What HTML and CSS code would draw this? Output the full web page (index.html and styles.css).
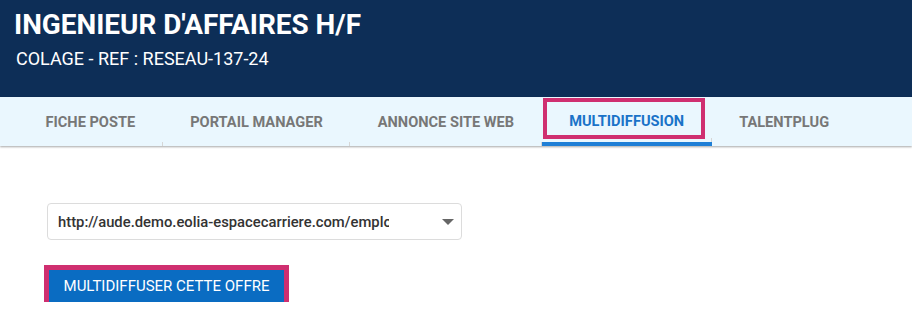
FILE: index.html
```html
<!DOCTYPE html>
<html>
<head>
    <title>Multidiffusion</title>
    <link rel="stylesheet" href="styles.css">
</head>
<body>
    <header class="job-header">
        <h1>INGENIEUR D'AFFAIRES H/F</h1>
        <p>COLAGE - REF : RESEAU-137-24</p>
    </header>
    <nav class="tabs">
        <a class="tab">FICHE POSTE</a>
        <a class="tab">PORTAIL MANAGER</a>
        <a class="tab">ANNONCE SITE WEB</a>
        <a class="tab active">MULTIDIFFUSION<span class="mark"></span></a>
        <a class="tab last">TALENTPLUG</a>
    </nav>
    <main class="content">
        <div class="site-select">
            <span class="site-value">http://aude.demo.eolia-espacecarriere.com/emploi</span>
            <span class="caret"></span>
        </div>
        <button class="diffuse-button">MULTIDIFFUSER CETTE OFFRE</button>
    </main>
</body>
</html>
```

FILE: styles.css
```css
body {
    margin: 0;
    padding: 0;
    background: #fff;
    font-family: Roboto, "Liberation Sans", sans-serif;
}
.job-header {
    background: #0d2e57;
    color: #fff;
    height: 97px;
    padding: 9px 14px 0;
    box-sizing: border-box;
}
.job-header h1 {
    margin: 0;
    font-size: 27.9px;
    font-weight: 700;
    line-height: 32px;
}
.job-header p {
    margin: 7px 0 0 2px;
    font-size: 18px;
    line-height: 22px;
}
.tabs {
    display: flex;
    background: #eaf7fe;
    height: 49px;
    padding-left: 18px;
    box-shadow: 0 1px 2px rgba(0, 0, 0, 0.35);
    position: relative;
}
.tab {
    position: relative;
    display: flex;
    align-items: center;
    padding: 0 27.5px;
    font-size: 14.6px;
    font-weight: 700;
    color: #777;
}
.tab::after {
    content: "";
    position: absolute;
    right: 0;
    bottom: 0;
    width: 1px;
    height: 4px;
    background: #d6d6d6;
}
.tab.last::after {
    display: none;
}
.tab.active {
    color: #1a73c8;
    border-bottom: 4px solid #1f7fd6;
    padding-top: 3px;
    box-sizing: border-box;
}
.mark {
    position: absolute;
    left: 1px;
    right: 7px;
    top: 1px;
    bottom: 3px;
    border: 4px solid #cf2f70;
}
.content {
    padding: 57px 47px 0;
}
.site-select {
    display: flex;
    align-items: center;
    width: 415px;
    height: 37px;
    box-sizing: border-box;
    border: 1px solid #dcdcdc;
    border-radius: 4px;
    padding: 0 7px 0 10px;
}
.site-value {
    width: 331px;
    overflow: hidden;
    white-space: nowrap;
    font-size: 14.8px;
    font-weight: 500;
    color: #333;
}
.caret {
    margin-left: auto;
    width: 0;
    height: 0;
    border-left: 6px solid transparent;
    border-right: 6px solid transparent;
    border-top: 6px solid #666;
}
.diffuse-button {
    display: block;
    margin: 30px 0 0 2px;
    width: 235px;
    height: 32px;
    background: #0a6cc2;
    color: #fff;
    border: none;
    outline: 5px solid #cf2f70;
    font-family: Roboto, "Liberation Sans", sans-serif;
    font-size: 15px;
    padding: 0;
}
```
